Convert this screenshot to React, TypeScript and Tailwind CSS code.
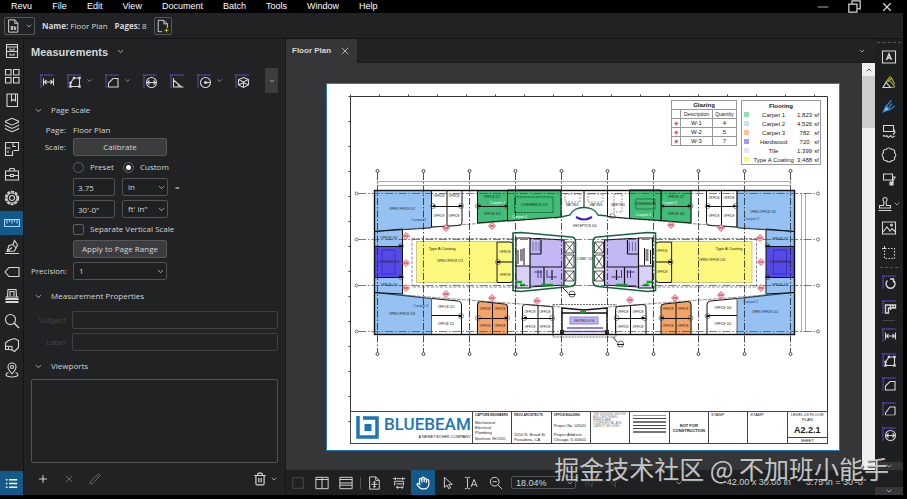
import React from "react";
import { ChevronDown, ChevronUp, Hand, Layers, Pencil, Plus, Trash2, X } from "lucide-react";

type IconProps = { children: React.ReactNode; className?: string };

const Icon: React.FC<IconProps> = ({ children, className = "size-4" }) => (
  <svg
    viewBox="0 0 16 16"
    className={className}
    fill="none"
    stroke="currentColor"
    strokeWidth="1.1"
    aria-hidden="true"
  >
    {children}
  </svg>
);

// Icon with the dotted ruler in its corner
const RulerIcon: React.FC<{ children: React.ReactNode }> = ({ children }) => (
  <Icon>
    <path d="M1 2H14.5M2 2V15" stroke="#5347a8" strokeWidth="2" strokeDasharray="1.2 .9" />
    {children}
  </Icon>
);

const LengthIcon = () => (
  <RulerIcon>
    <path d="M4.5 5.5v7M14.5 5.5v7M5 9h9M7.5 7 5.5 9l2 2M11.5 7l2 2-2 2" />
  </RulerIcon>
);
const PolylengthIcon = () => (
  <RulerIcon>
    <path d="M4.5 13.5V10L8 5h5.5v8.5z" />
    <path
      d="M3.5 12.5h2v2h-2zM3.5 9h2v2h-2zM7 4h2v2H7zM12.5 4h2v2h-2zM12.5 12.5h2v2h-2z"
      fill="currentColor"
      strokeWidth=".4"
    />
  </RulerIcon>
);
const AreaIcon = () => (
  <RulerIcon>
    <path d="M4.5 14V10l4.500-4.500h5V14z" />
  </RulerIcon>
);
const DiameterIcon = () => (
  <RulerIcon>
    <circle cx="9.500" cy="9.500" r="5" />
    <path d="M5 9.500h9M7.500 7.500l-2 2 2 2M11.500 7.500l2 2-2 2" />
  </RulerIcon>
);
const AngleIcon = () => (
  <RulerIcon>
    <path d="M4.500 5v9h10M4.500 7l8 7M9 14c0-1 .3-2 1-2" />
  </RulerIcon>
);
const RadiusIcon = () => (
  <RulerIcon>
    <circle cx="9.500" cy="9.500" r="5" />
    <path d="M9.500 9.500H14" />
    <circle cx="9.500" cy="9.500" r="1" fill="currentColor" />
  </RulerIcon>
);
const VolumeIcon = () => (
  <RulerIcon>
    <path d="M9.500 4.500l5 2v5.500l-5 2.500-5-2.500V6.500zM4.500 6.500l5 2.500 5-2.500M9.500 9v5.500M4.500 12l5-2.500 5 2.500" />
  </RulerIcon>
);

const railIcons: { name: string; icon: React.ReactNode }[] = [
  {
    name: "File Access",
    icon: (
      <Icon>
        <path d="M2.500 1.500h11v13h-11zM2.500 4h11M2.500 8.500h11M6 5.500v1.500h4V5.500M6 10.500V12h4v-1.500" />
      </Icon>
    ),
  },
  {
    name: "Thumbnails",
    icon: (
      <Icon>
        <path d="M1.500 1.500h5.500v5.500H1.500zM9.500 1.500H15v5.500H9.500zM1.500 9.500h5.500V15H1.500zM9.500 9.500H15V15H9.500z" />
      </Icon>
    ),
  },
  {
    name: "Bookmarks",
    icon: (
      <Icon>
        <path d="M3 2h10.500v12.500H3zM7.500 2v7l2-1.500 2 1.500V2" />
      </Icon>
    ),
  },
  { name: "Layers", icon: <Layers className="size-4" strokeWidth={1.6} /> },
  {
    name: "Spaces",
    icon: (
      <Icon>
        <path d="M1.500 1.500h13v8h-5M1.500 1.500v13h7v-4.500M1.500 7h5M9 1.500v4h3M4 9.500v2.500" />
      </Icon>
    ),
  },
  {
    name: "Tool Chest",
    icon: (
      <Icon>
        <path d="M1.500 5h13v9h-13zM1.500 9.500h5M9.500 9.500h5M6.500 8.500h3v2h-3zM5 5l1-2.500h4L11 5" />
      </Icon>
    ),
  },
  {
    name: "Properties",
    icon: (
      <Icon>
        <circle cx="8" cy="8" r="6.300" strokeDasharray="3 1" strokeWidth="1.800" />
        <circle cx="8" cy="8" r="5" />
        <circle cx="8" cy="8" r="2.500" />
      </Icon>
    ),
  },
  {
    name: "Measurements",
    icon: (
      <Icon>
        <path d="M.6 4.500h14.800v7H.6zM3 4.500v4M5.500 4.500v2.500M8 4.500v4M10.500 4.500v2.500M13 4.500v4" />
      </Icon>
    ),
  },
  {
    name: "Signatures",
    icon: (
      <Icon>
        <path d="M1 14.500h14M3 12.500l2-6 4-1 3 3.500-1.500 3zM3 12.500l5-4M9 5.500l1.500-4 3 4.500-1.500 3" />
      </Icon>
    ),
  },
  {
    name: "Flags",
    icon: (
      <Icon>
        <path d="M5 3.500h10v9H5L1 8z" />
      </Icon>
    ),
  },
  {
    name: "Sets",
    icon: (
      <Icon>
        <path d="M3.500 8.500l.5-7h8l.5 7M6 8V3.500h4V8M1.500 9h13M1.500 11.500h13" />
        <path d="M1.500 11h13M1.500 14h13" strokeWidth="2" />
      </Icon>
    ),
  },
  {
    name: "Search",
    icon: (
      <Icon>
        <circle cx="6.500" cy="6.500" r="5" />
        <path d="M10 10l5 5" strokeWidth="1.500" />
      </Icon>
    ),
  },
  {
    name: "3D Model Tree",
    icon: (
      <Icon>
        <path d="M1.500 6l3-2.500 6-2 4 2v7l-4 4L8 13V9.500L1.500 9zM1.500 9v3.500H4.500V10M4.500 12.500L8 13" />
      </Icon>
    ),
  },
  {
    name: "Places",
    icon: (
      <Icon>
        <path d="M8 12C5 8.500 4 7 4 5a4 4 0 018 0c0 2-1 3.500-4 7z" />
        <circle cx="8" cy="5" r="1.500" />
        <path d="M4.500 10.500C.5 12 1 15 8 15s7.500-3 3.500-4.500" />
      </Icon>
    ),
  },
];

const markupIcons: { name: string; icon: React.ReactNode }[] = [
  {
    name: "Text Box",
    icon: (
      <Icon>
        <path d="M1.500 2h13v12h-13z" />
        <path d="M5.500 11L8 5l2.500 6M6.500 9h3" strokeWidth="1.500" />
      </Icon>
    ),
  },
  {
    name: "Highlight",
    icon: (
      <Icon>
        <path d="M2 13.500l3-5 4.500 5z" />
        <path d="M5 8l4.500-6M9.500 13.500l4.500-.5M6.500 8l4-4 3 6M8.500 6.500l5.500 6" stroke="#b9b532" />
      </Icon>
    ),
  },
  {
    name: "Pen",
    icon: (
      <Icon>
        <path d="M5.500 8l5-6M9 11.500l5-3.500M8 9.500l3-4" stroke="#2f7fd0" strokeWidth="1.300" />
        <path d="M2 14l3-6 4 3.500z" fill="#8cc4ee" stroke="#2f7fd0" />
      </Icon>
    ),
  },
  {
    name: "Cloud+",
    icon: (
      <Icon>
        <path d="M2.500 2.500h10v6h-10zM12.500 5.500L14 9.500l-2 2" />
        <path d="M2 13.500c1-2 2 0 2.500 0s1-2 2 0 1.500 0 2 0 1-2 2 0 1.500 0 3.500-.5" />
      </Icon>
    ),
  },
  {
    name: "Cloud",
    icon: (
      <Icon>
        <path d="M5 2.500c2-2 4-2 6 0 2.500 0 3 1 2.500 3 2 2 2 3 0 5 .5 2-.5 3-2.500 3-2 2-4 2-6 0-2.500 0-3-1-2.500-3-2-2-2-3 0-5-.5-2 0-3 2.500-3z" />
      </Icon>
    ),
  },
  {
    name: "Callout",
    icon: (
      <Icon>
        <path d="M2.500 3h9v6h-9zM11.500 6H14l-3 6" />
        <path d="M9 11h3v3H9z" fill="currentColor" />
      </Icon>
    ),
  },
  {
    name: "Stamp",
    icon: (
      <Icon>
        <path d="M1.500 14.500h13M2.500 12v-2.500H6.500L7 6C5 3.500 6 1.500 8 1.500S11 3.500 9 6l.5 3.500h4V12z" />
      </Icon>
    ),
  },
  {
    name: "Image",
    icon: (
      <Icon>
        <path d="M1.500 2h13v12h-13zM2 12l4-5 3 4 2-2.500 3.500 3.500" />
        <circle cx="10.500" cy="5" r="1" />
      </Icon>
    ),
  },
  {
    name: "Snapshot",
    icon: (
      <Icon>
        <path d="M1 3.500h3M3.500 1v3" />
        <path d="M4 3.500h9.500v10h-10V4" strokeDasharray="1.500 1.500" />
      </Icon>
    ),
  },
];

const rotateIcons: { name: string; icon: React.ReactNode }[] = [
  {
    name: "Calibrate",
    icon: (
      <RulerIcon>
        <path d="M6.500 6.500A4.500 4.500 0 1012 6M9 5h3.500v3.500" strokeWidth="1.400" />
      </RulerIcon>
    ),
  },
  {
    name: "Dimension",
    icon: (
      <RulerIcon>
        <path d="M4.500 6h10v3H7.500v5h-3zM9.500 6v5M12 6v3" strokeWidth="1.400" />
      </RulerIcon>
    ),
  },
];

const measureIcons: { name: string; icon: React.ReactNode }[] = [
  { name: "Length", icon: <LengthIcon /> },
  { name: "Polylength", icon: <PolylengthIcon /> },
  { name: "Area", icon: <AreaIcon /> },
  {
    name: "Perimeter",
    icon: (
      <RulerIcon>
        <path d="M4.500 14V12L9 6h5v8" />
        <path d="M4.500 14h9.500" strokeWidth=".6" />
      </RulerIcon>
    ),
  },
  { name: "Diameter", icon: <DiameterIcon /> },
];

/* ---------- Floor plan ---------- */

const columns = [377.5, 423.5, 469.5, 515.5, 561.5, 607.5, 653.5, 698.5, 744.5, 790.5];
const rows = [193.5, 239.5, 285.5, 331.5];
const tags = [
  [446, 228], [492, 226], [406, 236], [406, 263], [406, 288], [446, 294], [492, 298], [537, 301],
  [671, 225], [721, 228], [760, 238], [761, 262], [761, 288], [721, 295], [675, 298], [630, 300],
];
const doors = [
  [433, 206], [461, 206], [478, 206], [507, 206], [401, 246], [401, 277], [498, 262],
  [461, 316], [478, 318], [507, 318], [524, 318], [552, 318], [556, 216],
];
const roomNames: [number, number, string][] = [
  [402, 210, "OPEN OFFICE 101"], [402, 315, "OPEN OFFICE 108"], [389, 239, "OFFICE 102"],
  [389, 263, "CONFERENCE"], [389, 286, "OFFICE 104"], [439, 197, "OFFICE"], [454, 197, "OFFICE"],
  [439, 217, "OFFICE"], [454, 217, "OFFICE"], [492, 198, "OFFICE 117"], [492, 215, "OFFICE 118"],
  [534, 206, "CONFERENCE 119"], [450, 262, "OPEN OFFICE 121"], [505, 253, "OFFICE"],
  [505, 276, "OFFICE"], [446, 308, "OFFICE 110"], [446, 325, "OFFICE 111"], [485, 310, "OFFICE"],
  [500, 310, "OFFICE"], [485, 327, "OFFICE"], [500, 327, "OFFICE"], [530, 313, "OFFICE"],
  [545, 313, "OFFICE"], [530, 328, "OFFICE"], [545, 328, "OFFICE"], [572, 206, "WAITING"],
  [596, 206, "WAITING"], [618, 206, "MEETING"], [585, 227, "RECEPTION 100"], [585, 260, "LOBBY 150"],
  [645, 205, "CONFERENCE"], [676, 198, "OFFICE 127"], [676, 215, "OFFICE 128"], [714, 199, "OFFICE"],
  [729, 199, "OFFICE"], [714, 217, "OFFICE"], [729, 217, "OFFICE"], [763, 213, "OPEN OFFICE 130"],
  [780, 240, "OFFICE 131"], [780, 263, "CONFERENCE"], [780, 286, "OFFICE 133"],
  [712, 261, "OPEN OFFICE 134"], [662, 252, "OFFICE"], [662, 273, "OFFICE"], [623, 313, "OFFICE"],
  [638, 313, "OFFICE"], [623, 328, "OFFICE"], [638, 328, "OFFICE"], [668, 310, "OFFICE"],
  [683, 310, "OFFICE"], [668, 327, "OFFICE"], [683, 327, "OFFICE"], [723, 309, "OFFICE 140"],
  [723, 325, "OFFICE 141"], [765, 313, "OPEN OFFICE 142"], [584, 322, "VESTIBULE 99"],
];

const Elevator: React.FC<{ y: number; h: number }> = ({ y, h }) => (
  <path d={`M565 ${y}h9v${h}h-9zl9 ${h}M574 ${y}l-9 ${h}`} strokeWidth=".7" />
);

// One wing of the building; the other wing is its mirror image
const Wing: React.FC = () => (
  <g stroke="#111" strokeWidth="1" fill="none">
    <g stroke="none">
      <path d="M374 190h57.500v38l-29 2v16.500H374z" fill="#95c2f3" />
      <path d="M374 277.500h28.500V294l29 4.500v36H374z" fill="#95c2f3" />
      <path d="M374 246.500h28.500v31H374z" fill="#5549e8" />
      <path d="M477 190h30.500v31l-30.500 2.500z" fill="#42bd78" />
      <rect x="416.500" y="241.500" width="80" height="41" fill="#fbf87d" />
      <rect x="496.500" y="241.500" width="16" height="41" fill="#fbf87d" />
      <path d="M477 301.500l30.500 3v30H477z" fill="#f4a468" />
      <path d="M530 238l34 2v45l-34 2z" fill="#c3b8f3" />
      <path d="M516 266h14v22h-14z" fill="#d9d2f7" />
    </g>
    <path d="M374 231.500l28.500-2.500v65l-28.500-1.500M374 246.500h28.500M374 277.500h28.500" />
    <path d="M431.500 190v38M431.500 298.500v36" strokeWidth=".6" />
    <path d="M374 292.500l57 6M374 231.500l57-3.500" strokeWidth=".8" />
    <rect x="382" y="250" width="13" height="24" stroke="#2222aa" strokeWidth=".6" />
    <path d="M431.500 190v37l27-1.500q3.500 0 3.500-3V190M447 190v36M431.500 206.500H462" />
    <path d="M477.500 190v33l30-2.500V190M477.500 206.500h30" />
    <path d="M431.500 298.500l27 2.500q3 .5 3 4v29M431.500 315.500h30" />
    <path d="M477.500 334v-29q0-3.500 3-3.500l24 2.500q3 0 3 3v27M492.500 303v31M477.500 318.500h30" />
    <path d="M522.500 334v-27q0-2.500 3-2.500l25 2q2.500 0 2.500 3v24M538 306v28M522.500 318.500H553" />
    <path d="M497 242h13q3 0 3 3v34q0 3.500-3 3.500h-13zM497 262h16" />
    <path d="M412 238.500h103M412 238.500V287h103" strokeWidth=".6" strokeDasharray="3 1.500" stroke="#444" />
    <path d="M402 229.500L561 217M402 295l159 12" strokeWidth=".6" strokeDasharray="4 1" stroke="#444" />
    <rect x="416.500" y="241.500" width="80" height="41" stroke="#9a9a50" strokeWidth=".5" />

    {/* Service core */}
    <path d="M513 233l8-.5 50 4.500q4.500 0 4.500 5v39q0 5-5 5.500l-50 5-7.500-1z" stroke="#14633f" strokeWidth="1.600" />
    <path d="M516 238h14v50h-14zM530 238l34 2v45l-34 2M530 267h32M564 240v46M544 267v19M552 270v10M516 266h14M541 240v14M530 254h11" strokeWidth="1.200" />
    <path d="M533 242v9M536 242v9M539 242v9" strokeWidth=".6" stroke="#453b78" />
    <path d="M518 250v14M520 250h3M520 252h3M520 254h3M520 256h3M520 258h3M520 260h3M524 248v17" />
    <Elevator y={242} h={11} />
    <Elevator y={255} h={13} />
    <Elevator y={271} h={10} />
    <path d="M538 270v8M541 270v8M547 270v8M534 272h8M548 277h9" stroke="#453b78" />
    <path d="M516 282h6M520 285h5M541 285h12" stroke="#18a02c" strokeWidth="2.500" />

    {doors.map(([x, y]) => (
      <circle key={`${x}-${y}`} cx={x} cy={y} r="2.500" strokeWidth=".6" stroke="#444" />
    ))}
    <path d="M433 206h2M459 206h3M478 206h3M505 206h3M399 246h3M399 277h3M497 262h3M459 316h3M505 318h3M524 318h3" strokeWidth="2" />
  </g>
);

const FloorPlan: React.FC = () => (
  <svg viewBox="327 84 512 366" className="absolute inset-0 size-full" fill="none" role="img" aria-label="Level 03 floor plan">
    {/* Sheet frame with its ticks */}
    <path d="M350.500 412V96.500h477V412" stroke="#333" />
    <path d="M350 95.500h478" stroke="#444" strokeWidth="2" strokeDasharray="1 28" />
    <path d="M349.500 96v348" stroke="#444" strokeWidth="2" strokeDasharray="1 24" />

    <Wing />
    <g transform="matrix(-1 0 0 1 1168.500 0)">
      <Wing />
    </g>

    {/* Conference rooms either side of the entrance */}
    <path d="M507.500 190H561v27l-53.500 4z" fill="#42bd78" stroke="#111" />
    <path d="M514.500 197H553v15.500h-38.500z" stroke="#145c34" strokeDasharray="2 .7" />
    <path d="M629.500 190H661v30.500l-31.500-2z" fill="#42bd78" stroke="#111" />
    <path d="M636 199h19v10h-19z" stroke="#145c34" strokeWidth=".7" />
    <path d="M607.500 190v26.500l22 2M584 190v17" stroke="#111" />
    <path d="M561 217l9-2c4-10 24-10 28 0l10 1" stroke="#14633f" strokeWidth="1.400" />
    <path d="M576 217q8 5 16 0" stroke="#3028cc" strokeWidth="2.200" />
    <path d="M565 194h15v8h-15zM588 194h15v8h-15zM614 194h8v18h-8z" stroke="#555" strokeWidth=".6" strokeDasharray="2 1" />

    {/* Entrance vestibule */}
    <path d="M553 304.500h63V337h-63z" stroke="#333" strokeWidth=".7" strokeDasharray="2 1" />
    <path d="M562 307.500v27M607 307.500v27M562 308l22 2 23-2M562 313h45" stroke="#111" strokeWidth="1.400" />
    <path d="M563 331.500h43M567 328h36" stroke="#6c5bb8" strokeWidth="1.500" />
    <rect x="570" y="317" width="28" height="7" fill="#c3b8f3" stroke="#6c5bd8" strokeWidth=".7" />
    <path d="M560 330h4v4h-4zM605 330h4v4h-4z" fill="#222" />
    <path d="M580 312h6" stroke="#18a02c" strokeWidth="2" />
    <path d="M568.500 294.500h7M563 288l5 5M617 344.500h7M613 337l4 5" stroke="#222" />
    <circle cx="572" cy="294" r="3" stroke="#222" strokeWidth=".7" />
    <circle cx="620.500" cy="344" r="3" stroke="#222" strokeWidth=".7" />

    <rect x="374.500" y="190.500" width="420" height="144" stroke="#111" strokeWidth="1.400" />
    <path d="M377 181.500h414M377 185.500h414M801.500 193v139M805.500 193v139" stroke="#888" strokeWidth=".7" />

    {columns.map((x) => (
      <g key={x} stroke="#222" strokeWidth=".8">
        <path d={`M${x} 173V352`} strokeDasharray="7 2 1.500 2" />
        <circle cx={x} cy="171" r="1.500" />
        <circle cx={x} cy="354" r="1.500" />
      </g>
    ))}
    {rows.map((y) => (
      <g key={y} stroke="#444" strokeWidth=".7">
        <path d={`M358 ${y}H816`} strokeDasharray="8 2 1.500 2" />
        <circle cx="356.500" cy={y} r="1.500" />
        <circle cx="818" cy={y} r="1.500" />
      </g>
    ))}

    {tags.map(([x, y]) => (
      <g key={`${x}-${y}`} stroke="#d4384c">
        <path d={`M${x} ${y - 3.5}l3.500 3.500-3.500 3.500-3.500-3.500z`} fill="#f6c3c8" strokeWidth=".7" />
        <path d={`M${x - 2} ${y}h4`} strokeWidth="1.200" />
      </g>
    ))}

    <g fill="#222" fontFamily="Liberation Sans, sans-serif" fontSize="3" textAnchor="middle">
      {roomNames.map(([x, y, name]) => (
        <text key={`${x}-${y}`} x={x} y={y}>{name}</text>
      ))}
    </g>
    <g fill="#222" fontFamily="Liberation Sans, sans-serif" fontSize="4" textAnchor="middle">
      <text x="442" y="250">Type A Coating</text>
      <text x="729" y="250">Type A Coating</text>
    </g>
    <g fill="#1f3f8c" fontFamily="Liberation Sans, sans-serif" fontSize="4">
      <text x="411" y="221">Carpet 2</text>
      <text x="413" y="307">Carpet 2</text>
      <text x="744" y="220">Carpet 2</text>
      <text x="743" y="303">Carpet 2</text>
    </g>
    <g fill="#fff" fontFamily="Liberation Sans, sans-serif" fontSize="4">
      <text x="490" y="204">Carpet 1</text>
      <text x="512" y="218">Carpet 1</text>
      <text x="636" y="216">Carpet 1</text>
      <text x="662" y="204">Carpet 1</text>
    </g>
  </svg>
);

const glazing = [
  ["W-1", "4"],
  ["W-2", "5"],
  ["W-3", "7"],
];

const flooring = [
  { name: "Carpet 1", area: "1,823", color: "bg-[#8fe0b0]" },
  { name: "Carpet 2", area: "4,526", color: "bg-[#c8e0fb]" },
  { name: "Carpet 3", area: "782", color: "bg-[#fbc49c]" },
  { name: "Hardwood", area: "720", color: "bg-[#a399f0]" },
  { name: "Tile", area: "1,399", color: "bg-[#e8e4fb]" },
  { name: "Type A Coating", area: "3,488", color: "bg-[#fbfa7a]" },
];

const Legends: React.FC = () => (
  <div className="absolute top-4 right-[18px] flex items-start gap-1 text-[6px] leading-[8px] text-[#222]">
    <table className="w-[66px] border-collapse border border-[#999] bg-white text-center">
      <thead>
        <tr className="h-[9px]">
          <th colSpan={3} className="p-0">Glazing</th>
        </tr>
        <tr className="h-[9px] border-y border-[#999] text-[5px]">
          <td className="w-[9px] p-0" />
          <td className="border-x border-[#999] p-0">Description</td>
          <td className="p-0">Quantity</td>
        </tr>
      </thead>
      <tbody>
        {glazing.map(([name, qty]) => (
          <tr key={name} className="h-[9px] border-b border-[#999]">
            <td className="p-0 text-[#d4384c]">◈</td>
            <td className="border-x border-[#999] p-0">{name}</td>
            <td className="p-0">{qty}</td>
          </tr>
        ))}
      </tbody>
    </table>
    <table className="w-[80px] border-separate border-spacing-0 border border-[#999] bg-white text-center">
      <thead>
        <tr className="h-[9px]">
          <th colSpan={4} className="p-0">Flooring</th>
        </tr>
      </thead>
      <tbody>
        {flooring.map((f) => (
          <tr key={f.name} className="h-[9px]">
            <td className="w-[9px] p-0">
              <span className={`ml-[2px] block size-[5px] ${f.color}`} />
            </td>
            <td className="p-0 whitespace-nowrap">{f.name}</td>
            <td className="p-0">{f.area}</td>
            <td className="w-[7px] p-0">sf</td>
          </tr>
        ))}
      </tbody>
    </table>
  </div>
);

const TitleBlock: React.FC = () => (
  <div className="relative mt-auto mr-[11px] mb-[6px] ml-[23px] grid h-[33px] grid-cols-[122px_repeat(9,minmax(0,1fr))] divide-x divide-[#444] border border-[#444] text-[4px] leading-[5px] whitespace-nowrap text-[#222]">
    <div className="flex items-center gap-[5px] pl-[5px]">
      <svg viewBox="0 0 23 23" className="size-[23px] shrink-0" fill="none" stroke="#1b75bc" aria-hidden="true">
        <path d="M2 0V21H21V2H7" strokeWidth="3.500" />
        <path d="M8.500 8h7v7h-7z" fill="#1b75bc" stroke="none" />
      </svg>
      <div className="text-right">
        <div className="font-['Roboto'] text-[17px] leading-[18px] font-medium text-[#1b75bc]">BLUEBEAM</div>
        <div className="leading-[7px]">A NEMETSCHEK COMPANY</div>
      </div>
    </div>
    <div className="flex flex-col justify-between px-[2px] py-px">
      <b className="text-[3px]">CAPTURE ENGINEERS</b>
      <span>Mechanical<br />Electrical<br />Plumbing</span>
      <span className="text-[3px]">Manchester, NH 03101</span>
    </div>
    <div className="flex flex-col justify-between px-[2px] py-px">
      <b className="text-[3px]">REVU ARCHITECTS</b>
      <span>5550 N. Broad St<br />Pasadena, CA</span>
    </div>
    <div className="flex flex-col justify-between px-[2px] py-px">
      <b className="text-[3px]">OFFICE BUILDING</b>
      <span>Project No. 02020</span>
      <span>Project Address<br />Chicago, IL 60601</span>
    </div>
    <div className="px-[2px] pt-px text-[3px] leading-[3px] whitespace-normal text-[#777]">
      THE DESIGNS SHOWN AND DESCRIBED HEREIN ARE CONFIDENTIAL AND CANNOT BE USED
    </div>
    <div className="flex flex-col gap-[2px] px-[3px] pt-[3px]">
      <hr className="border-[#999]" />
      <hr className="border-[#444]" />
      <hr className="border-t-2 border-[#777]" />
      <hr className="border-[#444]" />
      <hr className="border-[#444]" />
      <hr className="border-t-2 border-[#777]" />
    </div>
    <div className="flex items-center justify-center text-center font-bold">
      NOT FOR<br />CONSTRUCTION
    </div>
    <div className="px-[2px]">STAMP</div>
    <div className="px-[2px]">STAMP</div>
    <div className="flex flex-col justify-between text-center">
      <span>LEVEL 03 FLOOR<br />PLAN</span>
      <b className="text-[9px] leading-[12px]">A2.2.1</b>
      <span className="border-t border-[#444]">SHEET</span>
    </div>
  </div>
);

/* ---------- Form parts ---------- */

const Section: React.FC<{ title: string }> = ({ title }) => (
  <h3>
    <button className="flex h-[22px] w-full items-center gap-2 pl-[3px] text-left">
      <ChevronDown className="size-[9px]" />
      {title}
    </button>
  </h3>
);

const Dropdown: React.FC<{ label?: string; id?: string; value: string; className: string }> = ({
  label,
  id,
  value,
  className,
}) => (
  <div className={`relative h-[18px] ${className}`}>
    <select
      id={id}
      aria-label={label}
      className="size-full appearance-none rounded-[2px] border border-[#505254] bg-[#1e2021] pl-[5px]"
    >
      <option>{value}</option>
    </select>
    <ChevronDown className="pointer-events-none absolute inset-y-0 right-[2px] my-auto size-[9px]" />
  </div>
);

const fieldClass = "h-[18px] min-w-0 rounded-[2px] border border-[#505254] bg-[#1e2021] px-1";
const buttonClass = "h-[18px] w-[94px] rounded-[2px] border border-[#545658] bg-[#3a3c3e] whitespace-nowrap";

const MeasurementsPanel: React.FC = () => (
  <section className="flex w-[263px] shrink-0 flex-col border-x border-[#141516] px-[7px] font-['Open_Sans'] text-[8px] leading-[12px]">
    <h2>
      <button className="flex h-[25px] items-center gap-2 font-['Liberation_Sans'] text-[11px] font-bold">
        Measurements
        <ChevronDown className="size-[9px]" />
      </button>
    </h2>
    <div className="mt-1 flex h-[25px] items-center gap-[11px] pl-2">
      <button aria-label="Length"><LengthIcon /></button>
      <button aria-label="Polylength" className="flex items-center gap-1">
        <PolylengthIcon />
        <ChevronDown className="size-[7px]" />
      </button>
      <button aria-label="Area" className="flex items-center gap-1">
        <AreaIcon />
        <ChevronDown className="size-[7px]" />
      </button>
      <button aria-label="Diameter"><DiameterIcon /></button>
      <button aria-label="Angle"><AngleIcon /></button>
      <button aria-label="Radius" className="flex items-center gap-1">
        <RadiusIcon />
        <ChevronDown className="size-[7px]" />
      </button>
      <button aria-label="Volume"><VolumeIcon /></button>
      <button aria-label="More tools" className="ml-auto flex h-[25px] w-[13px] items-center justify-center bg-[#3a3c3e]">
        <ChevronDown className="size-[8px]" />
      </button>
    </div>

    <div className="mt-[6px]">
      <Section title="Page Scale" />
    </div>
    <div className="grid grid-cols-[35px_1fr] items-center gap-x-[7px]">
      <span className="text-right">Page:</span>
      <span className="leading-[17px]">Floor Plan</span>
      <span className="text-right">Scale:</span>
      <button className={buttonClass}>Calibrate</button>
      <span />
      <div className="flex h-[22px] items-center">
        <label className="flex w-[50px] items-center gap-[6px]">
          <input type="radio" name="scale" className="size-[11px] appearance-none rounded-full border border-[#606264]" />
          Preset
        </label>
        <label className="flex items-center gap-[6px]">
          <input
            type="radio"
            name="scale"
            defaultChecked
            className="size-[11px] appearance-none rounded-full border border-[#606264] checked:bg-white checked:bg-clip-content checked:p-[2px]"
          />
          Custom
        </label>
      </div>
      <span />
      <div className="flex items-center gap-[7px]">
        <input aria-label="Paper length" defaultValue="3.75" className={`${fieldClass} w-[42px]`} />
        <Dropdown label="Paper unit" value="in" className="w-[46px]" />
        =
      </div>
      <span />
      <div className="mt-1 flex items-center gap-[7px]">
        <input aria-label="Real length" defaultValue={"30'-0\""} className={`${fieldClass} w-[42px]`} />
        <Dropdown label="Real unit" value={"ft' in\""} className="w-[46px]" />
      </div>
      <span />
      <label className="flex h-[22px] items-center gap-[6px]">
        <input type="checkbox" className="size-[11px] appearance-none rounded-[2px] border border-[#606264]" />
        Separate Vertical Scale
      </label>
      <span />
      <button className={buttonClass}>Apply to Page Range</button>
      <label htmlFor="precision" className="mt-1 text-right">Precision:</label>
      <Dropdown id="precision" value="1" className="mt-1 w-[94px]" />
    </div>

    <div className="mt-[5px]">
      <Section title="Measurement Properties" />
    </div>
    <div className="mt-1 grid grid-cols-[35px_1fr] items-center gap-x-[6px] gap-y-1 text-right text-[#48494b]">
      <label htmlFor="subject">Subject</label>
      <input id="subject" disabled className="h-[18px] rounded-[2px] border border-[#3e4042]" />
      <label htmlFor="label">Label</label>
      <input id="label" disabled className="h-[18px] rounded-[2px] border border-[#3e4042]" />
    </div>

    <div className="mt-1">
      <Section title="Viewports" />
    </div>
    <div className="mt-[2px] min-h-10 flex-1 rounded-[2px] border border-[#505254]" />
    <div className="flex h-8 items-center gap-[14px] pl-[6px]">
      <button aria-label="Add viewport"><Plus className="size-[12px]" /></button>
      <button aria-label="Remove viewport" disabled className="text-[#66686a]"><X className="size-[12px]" /></button>
      <button aria-label="Edit viewport" disabled className="text-[#66686a]"><Pencil className="size-[12px]" /></button>
      <button aria-label="Delete" className="ml-auto flex items-center gap-[3px]">
        <Trash2 className="size-[14px]" />
        <ChevronDown className="size-[8px]" />
      </button>
    </div>
  </section>
);

const BottomBar: React.FC = () => (
  <div className="flex h-[25px] shrink-0 items-center bg-[#1e2021] text-[9px] whitespace-nowrap">
    <button aria-label="Unsplit" className="flex w-6 justify-center text-[#4a4c4e]">
      <Icon className="size-[14px]"><path d="M2 2h12v12H2z" /></Icon>
    </button>
    <button aria-label="Split vertical" className="flex w-6 justify-center">
      <Icon className="size-[14px]"><path d="M1 1.500h14v13H1zM8 1.500v13M1 4h14" /></Icon>
    </button>
    <button aria-label="Split horizontal" className="flex w-6 justify-center">
      <Icon className="size-[14px]"><path d="M1 1.500h14v13H1zM1 4h14M1 8h14M1 10.500h14" /></Icon>
    </button>
    <span className="ml-[2px] h-3 w-px bg-[#505254]" />
    <button aria-label="Fit page" className="flex w-[26px] justify-center">
      <Icon className="size-[14px]"><path d="M3 1h7l4 4v10H3zM10 1v4h4M8.500 6v7M5 9.500h7M7 7.500L8.500 6 10 7.500M7 11.500L8.500 13l1.500-1.500" /></Icon>
    </button>
    <button aria-label="Fit width" className="flex w-6 justify-center">
      <Icon className="size-[14px]"><path d="M1 3h3M12 3h3M4 1.500v3M12 1.500v3M5 3h6M3 6h10M3 6v5M13 6v5M5 13h7M7 11.500L5 13l2 1.500M11 11.500l2 1.500-2 1.500M5 9h7" /></Icon>
    </button>
    <button aria-label="Pan" className="flex h-full w-6 items-center justify-center bg-[#14598c] text-white">
      <Hand className="size-[14px]" />
    </button>
    <button aria-label="Select" className="flex w-6 justify-center">
      <Icon className="size-[14px]"><path d="M5 1.500v11.500l3-2.500 2 4 2-1-2-4h4z" /></Icon>
    </button>
    <button aria-label="Select text" className="flex w-6 justify-center">
      <Icon className="size-[14px]"><path d="M1 1.500h2l1 1 1-1h2M4 2.500v11M1 14.500h2l1-1 1 1h2M8 12.500L11.500 4 15 12.500M9 10h5" /></Icon>
    </button>
    <button aria-label="Zoom" className="flex w-[26px] justify-center">
      <Icon className="size-[14px]"><circle cx="6.500" cy="6.500" r="5" /><path d="M10 10l5 5M4 6.500h5" /></Icon>
    </button>
    <div className="relative ml-[2px] h-[13px] w-[65px]">
      <select aria-label="Zoom level" className="block size-full appearance-none rounded-[2px] border border-[#505254] bg-[#1e2021] pl-1">
        <option>18.04%</option>
      </select>
      <ChevronDown className="pointer-events-none absolute inset-y-0 right-[2px] my-auto size-[8px]" />
    </div>
    <button aria-label="First page" className="ml-[8px] flex w-6 text-[#5c5e60]">
      <Icon className="size-[10px]"><path d="M3 2v12M13 2L6 8l7 6z" /></Icon>
    </button>
    <button aria-label="Previous page" className="flex w-6 text-[#5c5e60]">
      <Icon className="size-[10px]"><path d="M12 2L5 8l7 6z" /></Icon>
    </button>
    <button aria-label="Page list" className="ml-[42px] flex h-full w-[9px] items-center justify-center">
      <ChevronDown className="size-[8px]" />
    </button>
    <span className="ml-auto">42.00 x 30.00 in</span>
    <span className="mr-[9px] ml-[15px]">3.75 in = 30'-0"</span>
  </div>
);

const ToolColumn: React.FC<{ tools: { name: string; icon: React.ReactNode }[]; className: string }> = ({
  tools,
  className,
}) => (
  <div className={`flex flex-col ${className}`}>
    {tools.map((tool) => (
      <button key={tool.name} aria-label={tool.name} className="flex min-h-0 flex-1 items-center justify-center">
        {tool.icon}
        {tool.name === "Stamp" && <ChevronDown className="size-2" />}
      </button>
    ))}
  </div>
);

const menus = ["Revu", "File", "Edit", "View", "Document", "Batch", "Tools", "Window", "Help"];

export default function App() {
  return (
    <div className="relative flex h-screen flex-col overflow-hidden bg-black pr-1 pb-1 font-['Liberation_Sans',sans-serif] text-[#d6d6d6]">
      <header className="flex h-[13px] shrink-0 items-center justify-between pr-[9px] pl-[11px]">
        <nav className="flex gap-5 font-['Liberation_Sans'] text-[9px] leading-[13px] text-white">
          {menus.map((menu) => (
            <button key={menu} className="min-w-[15px]">{menu}</button>
          ))}
        </nav>
        <div className="flex items-center gap-[19px]">
          <button aria-label="Minimize"><Icon className="size-[12px]"><path d="M1 8h14" /></Icon></button>
          <button aria-label="Restore"><Icon className="size-[13px]"><path d="M1 5h10v10H1zM5 5V1h10v10h-4" strokeWidth="1.500" /></Icon></button>
          <button aria-label="Close"><X className="size-[14px]" /></button>
        </div>
      </header>

      <div className="flex h-[26px] shrink-0 items-center border-b border-[#141516] bg-[#202223] pl-1 font-['Open_Sans'] text-[8px]">
        <button aria-label="Profile" className="flex h-[18px] w-[31px] items-center justify-center gap-[5px] rounded-[2px] border border-[#55575a]">
          <Icon className="size-[14px]"><path d="M3 1h7l3.500 3.500V15H3zM10 1v4h3.500M6 8v4h1.500V8M9.500 8v4h1.500V9" /></Icon>
          <ChevronDown className="size-[8px]" />
        </button>
        <span className="ml-[7px]"><b>Name:</b> Floor Plan</span>
        <span className="ml-[7px]"><b>Pages:</b> 8</span>
        <button aria-label="Add page" className="ml-[7px] flex h-[18px] w-[18px] items-center justify-center rounded-[2px] border border-[#55575a]">
          <Icon className="size-[14px]">
            <path d="M7 14.500H2.500v-13H9l4 4V10M9 1.500v4h4" />
            <path d="M12 10.500v5M9.500 13h5" stroke="#b9b532" />
          </Icon>
        </button>
      </div>

      <div className="flex min-h-0 flex-1 bg-[#202223]">
        <nav className="flex w-[23px] shrink-0 flex-col justify-between">
          <div className="flex h-[343px] flex-col">
            {railIcons.map((item) => (
              <button
                key={item.name}
                aria-label={item.name}
                className={`flex min-h-0 flex-1 items-center justify-center ${
                  item.name === "Measurements" ? "bg-[#14598c] text-[#a9d3f2]" : ""
                }`}
              >
                {item.icon}
              </button>
            ))}
          </div>
          <button aria-label="Markups list" className="flex h-6 items-center justify-center bg-[#14598c] text-white">
            <Icon className="size-[13px]">
              <path d="M1 3.500h2M1 8h2M1 12.500h2M5 3.500h10M5 8h10M5 12.500h10" strokeWidth="1.800" />
            </Icon>
          </button>
        </nav>

        <MeasurementsPanel />

        <main className="flex min-w-0 flex-1 flex-col">
          <div className="flex h-6 shrink-0 items-center justify-between border-b border-[#1a1b1c] pr-[9px]">
            <div className="flex h-6 items-center gap-2 bg-[#343638] px-[6px] text-[8px] font-bold">
              Floor Plan
              <button aria-label="Close tab"><X className="size-[12px]" strokeWidth={1.5} /></button>
            </div>
            <button aria-label="Open tabs"><ChevronDown className="size-[8px]" /></button>
          </div>
          <div className="flex min-h-0 flex-1">
            <div className="min-w-0 flex-1 overflow-hidden bg-[#343638] pt-5 pl-10">
              <div className="relative flex h-[368px] w-[514px] flex-col border border-[#2b7cb4] bg-white">
                <FloorPlan />
                <Legends />
                <TitleBlock />
              </div>
            </div>
            <div className="flex w-[13px] shrink-0 flex-col bg-[#f0f0f0] text-[#555]">
              <button aria-label="Scroll up" className="flex h-[13px] items-center justify-center">
                <ChevronUp className="size-[8px]" strokeWidth={3} />
              </button>
              <div className="h-[52px] bg-[#cdcdcd]" />
            </div>
          </div>
          <BottomBar />
        </main>

        <aside className="flex w-[28px] shrink-0 flex-col bg-[#1d1f20]">
          <div className="mx-[2px] mt-[3px] border-t border-dashed border-[#55575a]" />
          <ToolColumn tools={markupIcons} className="mt-[2px] h-[220px]" />
          <div className="mx-[5px] mt-[2px] border-t border-dashed border-[#55575a]" />
          <ToolColumn tools={rotateIcons} className="mt-[2px] h-[49px]" />
          <div className="mx-[8px] mt-px border-t border-[#45474a]" />
          <ToolColumn tools={measureIcons} className="mt-[2px] h-[123px]" />
          <button aria-label="More tools" className="mt-auto mb-[17px] flex h-[8px] items-center justify-center bg-[#343638]">
            <ChevronDown className="size-[8px]" />
          </button>
          <button aria-label="More toolbars" className="flex h-[8px] items-center justify-center bg-[#343638]">
            <ChevronDown className="size-[8px]" />
          </button>
        </aside>
      </div>

      <div className="pointer-events-none absolute right-[18px] bottom-[16px] font-['Noto_Sans_CJK_SC',sans-serif] text-[25px] leading-[30px] text-[#d8d8d8]/90 [text-shadow:1px_1px_1px_#333]">
        掘金技术社区 @ 不加班小能手
      </div>
    </div>
  );
}
